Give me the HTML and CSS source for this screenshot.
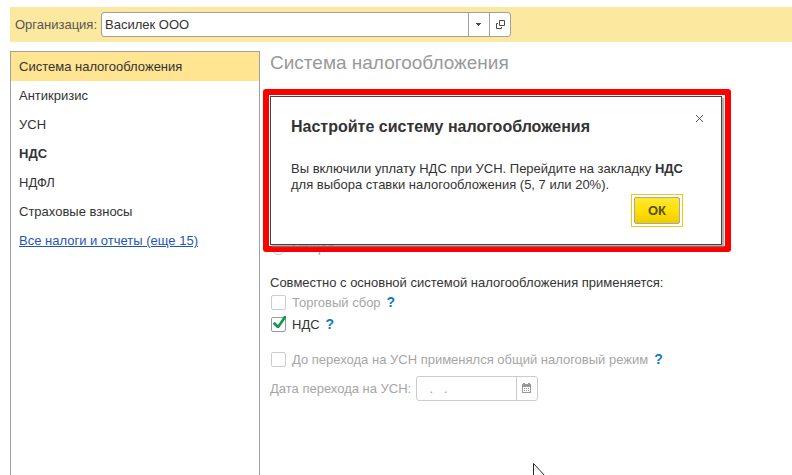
FILE: index.html
```html
<!DOCTYPE html>
<html lang="ru">
<head>
<meta charset="utf-8">
<title>Система налогообложения</title>
<link rel="stylesheet" href="styles.css">
</head>
<body>
<header class="topbar">
  <label class="topbar-label" for="org">Организация:</label>
  <div class="field org-field">
    <input id="org" class="field-input" type="text" value="Василек ООО">
    <button class="field-button" type="button" aria-label="Выбрать">
      <svg width="6" height="3" viewBox="0 0 6 3"><path d="M0 0h5v1H4v1H3v1H2V2H1V1H0z" fill="#4a4a4a"/></svg>
    </button>
    <button class="field-button" type="button" aria-label="Открыть">
      <svg width="10" height="9" viewBox="0 0 10 9" fill="none" stroke="#4a4a4a"><path d="M4.500 .5h5v5h-5z"/><path d="M3 3.500H1.500v5h5V7"/></svg>
    </button>
  </div>
</header>
<div class="workspace">
  <nav class="sidebar">
    <a class="nav-item active" href="#system">Система налогообложения</a>
    <a class="nav-item" href="#anticrisis">Антикризис</a>
    <a class="nav-item" href="#usn">УСН</a>
    <a class="nav-item strong" href="#nds">НДС</a>
    <a class="nav-item" href="#ndfl">НДФЛ</a>
    <a class="nav-item" href="#insurance">Страховые взносы</a>
    <a class="nav-item more" href="#all">Все налоги и отчеты (еще 15)</a>
  </nav>
  <main class="content">
    <h1 class="title">Система налогообложения</h1>
    <div class="option system-option">
      <input id="general" class="radio" type="radio" disabled>
      <label class="muted" for="general">Общая</label>
    </div>
    <p class="caption">Совместно с основной системой налогообложения применяется:</p>
    <div class="option">
      <input id="trade" class="check" type="checkbox" disabled>
      <label class="muted" for="trade">Торговый сбор</label>
      <a class="help" href="#help-trade">?</a>
    </div>
    <div class="option">
      <span class="check-wrap">
        <input id="vat" class="check" type="checkbox" checked>
        <svg class="tick" width="15" height="15" viewBox="0 0 15 15"><path d="M2 6l2-1 3 3 6-9 2 0v2L8 11H6L2 7z" fill="#0b9b4b"/></svg>
      </span>
      <label for="vat">НДС</label>
      <a class="help" href="#help-vat">?</a>
    </div>
    <div class="option transition-option">
      <input id="before" class="check" type="checkbox" disabled>
      <label class="muted" for="before">До перехода на УСН применялся общий налоговый режим</label>
      <a class="help" href="#help-before">?</a>
    </div>
    <div class="date-row">
      <label class="muted" for="date">Дата перехода на УСН:</label>
      <div class="field date-field">
        <input id="date" class="field-input" type="text" value="  .   ." disabled>
        <button class="field-button" type="button" aria-label="Календарь" disabled>
          <svg width="10" height="11" viewBox="0 0 10 11"><path d="M1 0h2v1h3V0h2v1h1v9H0V1h1z" fill="#999"/><path d="M1 4h7v5H1z" fill="#fff"/><path d="M2 5h1v1H2zM4 5h1v1H4zM6 5h1v1H6zM2 7h1v1H2zM4 7h1v1H4zM6 7h1v1H6z" fill="#999"/></svg>
        </button>
      </div>
    </div>
    <div class="highlight">
      <section class="dialog" role="dialog" aria-labelledby="dialog-title">
        <div class="dialog-head">
          <h2 id="dialog-title" class="dialog-title">Настройте систему налогообложения</h2>
          <button class="close" type="button" aria-label="Закрыть">
            <svg width="7" height="7" viewBox="0 0 7 7"><path d="M0 0l7 7M7 0L0 7" stroke="#555"/></svg>
          </button>
        </div>
        <p class="dialog-text">Вы включили уплату НДС при УСН. Перейдите на закладку <b>НДС</b><br>для выбора ставки налогообложения (5, 7 или 20%).</p>
        <div class="dialog-actions">
          <span class="ok-frame"><button class="ok" type="button">ОК</button></span>
        </div>
      </section>
    </div>
  </main>
</div>
<svg class="pointer" width="13" height="20" viewBox="0 0 13 20"><path d="M.5.5v17l4-4 3 6 2-1-3-5h6z" fill="#fff" stroke="#223"/></svg>
</body>
</html>
```
FILE: styles.css
```css
* { box-sizing: border-box; }

body {
  margin: 0;
  height: 100vh;
  padding: 7px 0 0 10px;
  overflow: hidden;
  position: relative;
  display: flex;
  flex-direction: column;
  gap: 9px;
  background: #fff;
  color: #333;
  font: 13px/16px "Liberation Sans", Arial, sans-serif;
}

button, input { font: inherit; color: inherit; }
p, h1, h2 { margin: 0; }
svg { display: block; }

.topbar {
  display: flex;
  align-items: center;
  flex: none;
  height: 35px;
  padding-left: 5px;
  background: #fce99f;
}
.topbar-label { width: 86px; color: #555; }

.field {
  display: flex;
  height: 25px;
  border: 1px solid #a0a0a0;
  border-radius: 3px;
  background: #fff;
  overflow: hidden;
}
.field-input {
  flex: 1;
  min-width: 0;
  border: 0;
  padding: 0 3px;
  background: transparent;
  outline: 0;
}
.field-button {
  display: flex;
  align-items: center;
  justify-content: center;
  width: 21px;
  padding: 0;
  border: 0;
  border-left: 1px solid #a0a0a0;
  background: transparent;
}
.org-field { width: 410px; }

.workspace { flex: 1; display: flex; min-height: 0; }

.sidebar {
  flex: none;
  width: 250px;
  border: 1px solid #a0a0a0;
  border-bottom: 0;
}
.nav-item {
  display: block;
  padding: 0 8px;
  line-height: 29px;
  color: #333;
  text-decoration: none;
}
.active { background: #ffe491; }
.strong { font-weight: bold; }
.more { color: #1e56b8; text-decoration: underline; }

.content { flex: 1; position: relative; padding-left: 10px; }
.title {
  font-size: 19px;
  line-height: 24px;
  font-weight: normal;
  color: #999;
}

.option {
  display: flex;
  align-items: center;
  gap: 6px;
  height: 22px;
  padding-left: 1px;
}
.option label { line-height: 18px; padding-top: 1px; }
.system-option { margin-top: 161px; }
.transition-option { margin-top: 13px; }
.caption { margin: 17px 0 0; }
.muted { color: #a6a6a6; }

.check, .radio {
  appearance: none;
  display: block;
  flex: none;
  width: 15px;
  height: 15px;
  margin: 0;
  border: 1px solid #999;
  border-radius: 2px;
  background: #fff;
}
.radio { border-radius: 50%; }
.check:disabled, .radio:disabled { border-color: #ccc; }
.check-wrap { position: relative; }
.tick { position: absolute; inset: 0; overflow: visible; pointer-events: none; }
.help { color: #0b7bc4; font-size: 14px; font-weight: bold; text-decoration: none; }

.date-row { display: flex; align-items: center; gap: 5px; margin-top: 6px; }
.date-field { width: 122px; border-color: #ccc; }
.date-field .field-input { padding-left: 5px; color: #999; white-space: pre; }
.date-field .field-button { border-color: #ccc; }

.highlight {
  position: absolute;
  top: 38px;
  left: 3px;
  width: 468px;
  padding: 1px 3px 1px 1px;
  border: 6px solid #f00;
  border-radius: 3px;
}
.dialog {
  height: 149px;
  padding: 20px;
  border: 1px solid #444;
  background: #fff;
  box-shadow: 2px 2px 1px #888a;
}
.dialog-head { display: flex; justify-content: space-between; }
.dialog-title { font-size: 16px; line-height: 20px; }
.close {
  align-self: flex-start;
  padding: 0;
  margin-right: -2px;
  margin-top: -2px;
  border: 0;
  background: none;
}
.dialog-text { margin-top: 24px; }
.dialog-actions {
  display: flex;
  justify-content: flex-end;
  margin: 1px 18px 0 0;
}
.ok-frame { padding: 2px; border: 1px solid #f5c518; }
.ok {
  display: block;
  width: 46px;
  height: 27px;
  padding: 0;
  border: 1px solid #aaa89c;
  border-radius: 2px;
  background: linear-gradient(#ffe833, #ffdf00 55%, #eccb00);
  color: #554d20;
  font-weight: bold;
}

.pointer { position: absolute; left: 533px; top: 463px; }
```
